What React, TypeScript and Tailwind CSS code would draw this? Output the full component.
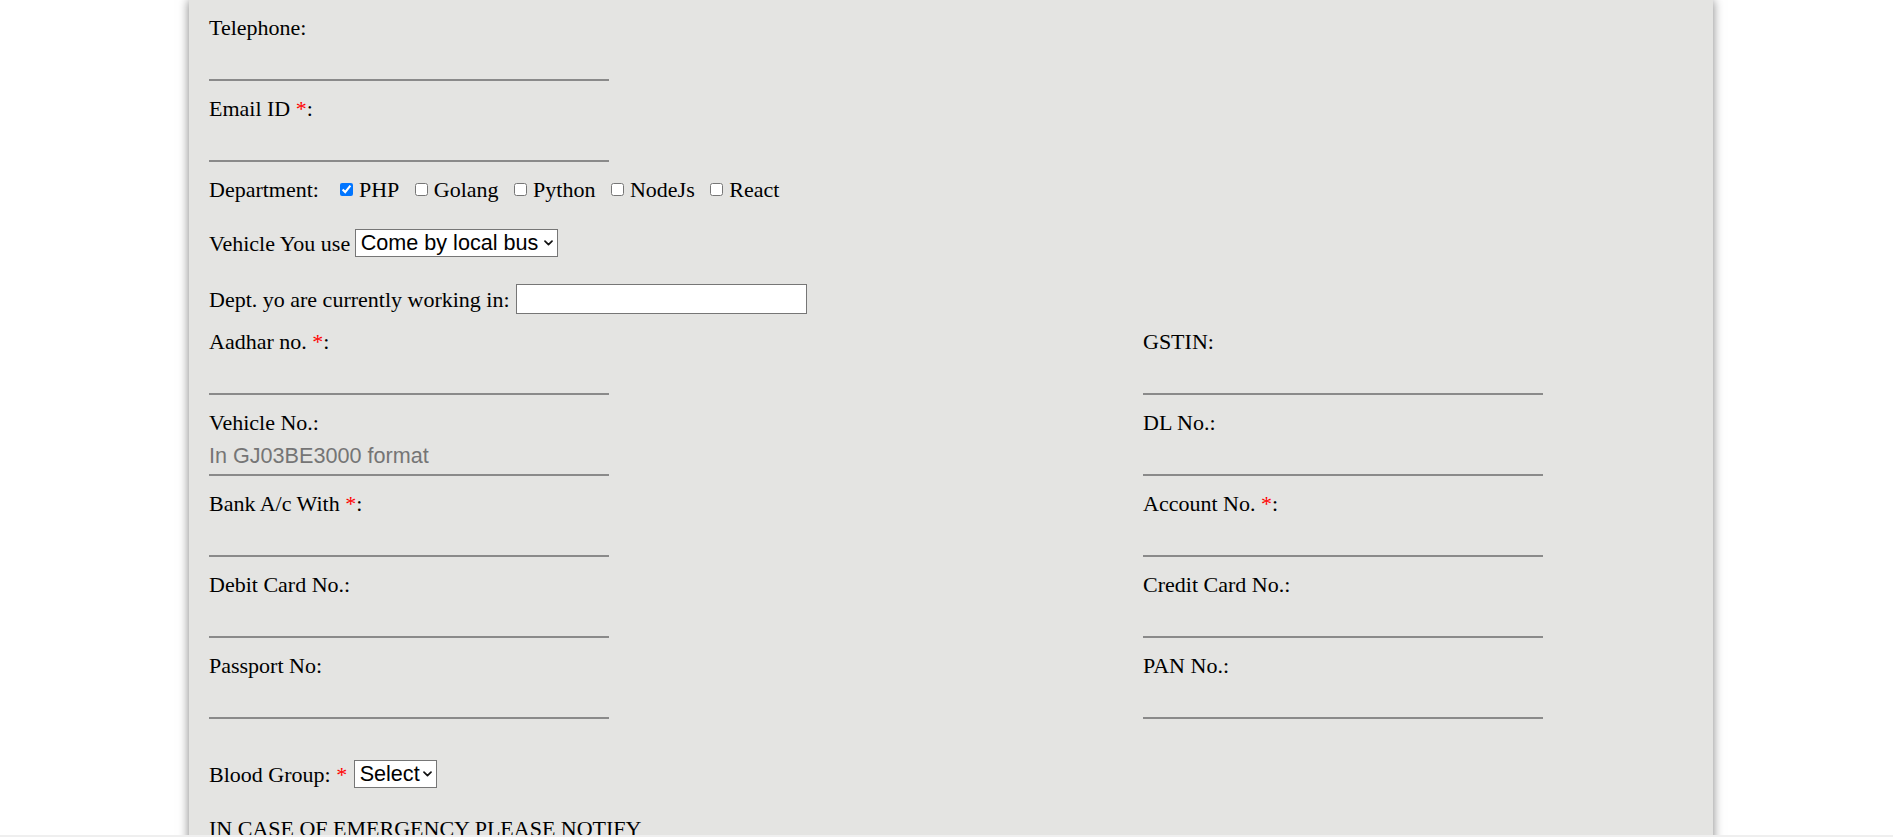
import React from "react";

function Req() {
  return (
    <>
      {" "}
      <span className="text-[#ff0000]">*</span>
    </>
  );
}

function Field({ label, req, placeholder }: { label: string; req?: boolean; placeholder?: string }) {
  return (
    <div className="mb-[15.5px]">
      <div className="h-[24px] leading-[24px] whitespace-nowrap">
        {label}
        {req ? <Req /> : null}:
      </div>
      <input
        type="text"
        placeholder={placeholder}
        className="mt-[4px] block w-[400px] h-[37.5px] border-0 border-b-2 border-solid border-[#8a8a8a] bg-transparent outline-none px-0 text-[21.6px] leading-[24px] text-black font-['Liberation_Sans',Arial,sans-serif] placeholder:text-[#757575]"
      />
    </div>
  );
}

function Chevron() {
  return (
    <svg
      className="pointer-events-none absolute right-[5px] top-1/2 -translate-y-1/2"
      width="9"
      height="6"
      viewBox="0 0 9 6"
      fill="none"
    >
      <path d="M1 1.2 L4.5 4.6 L8 1.2" stroke="#111" strokeWidth="1.7" strokeLinecap="round" strokeLinejoin="round" />
    </svg>
  );
}

function Check({ label, checked, first }: { label: string; checked?: boolean; first?: boolean }) {
  return (
    <div className={first ? "flex items-center ml-[21px]" : "flex items-center ml-[15.5px]"}>
      <input
        type="checkbox"
        defaultChecked={checked}
        className="m-0 w-[13px] h-[13px] accent-[#0075ff]"
      />
      <span className="ml-[6px]">{label}</span>
    </div>
  );
}

export default function App() {
  return (
    <div className="relative h-[837px] overflow-hidden bg-white font-['Liberation_Serif','Times_New_Roman',serif] text-[22px] text-black">
      <div className="ml-[189px] w-[1524px] min-h-[900px] bg-[#e4e4e2] shadow-[0_0_10px_rgba(0,0,0,0.5)] pl-[20px] pt-[15.5px]">
        <Field label="Telephone" />
        <Field label="Email ID" req />

        <div className="flex items-center h-[24px] leading-[24px] mt-[0.7px]">
          <span>Department:</span>
          <Check label="PHP" checked first />
          <Check label="Golang" />
          <Check label="Python" />
          <Check label="NodeJs" />
          <Check label="React" />
        </div>

        <div className="flex items-center h-[28px] mt-[27.6px]">
          <span>Vehicle You use</span>
          <div className="relative ml-[5px]">
            <select
              defaultValue="bus"
              className="block appearance-none w-[203px] h-[28px] bg-white border border-solid border-[#767676] pl-[4.5px] pr-[16px] text-[21.6px] leading-[24px] font-['Liberation_Sans',Arial,sans-serif] text-black outline-none"
            >
              <option value="bus">Come by local bus</option>
              <option value="car">Car</option>
              <option value="bike">Bike</option>
            </select>
            <Chevron />
          </div>
        </div>

        <div className="flex items-center h-[30px] mt-[27px]">
          <span>Dept. yo are currently working in:</span>
          <input
            type="text"
            className="ml-[6px] w-[291px] h-[30px] bg-white border border-solid border-[#767676] px-[2px] text-[21.6px] font-['Liberation_Sans',Arial,sans-serif] outline-none"
          />
        </div>

        <div className="grid grid-cols-[934px_1fr] mt-[15.5px]">
          <Field label="Aadhar no." req />
          <Field label="GSTIN" />
          <Field label="Vehicle No." placeholder="In GJ03BE3000 format" />
          <Field label="DL No." />
          <Field label="Bank A/c With" req />
          <Field label="Account No." req />
          <Field label="Debit Card No." />
          <Field label="Credit Card No." />
          <Field label="Passport No" />
          <Field label="PAN No." />
        </div>

        <div className="flex items-center h-[28px] mt-[25.7px]">
          <span>Blood Group:</span>
          <span className="ml-[5.5px] text-[#ff0000]">*</span>
          <div className="relative ml-[7px]">
            <select
              defaultValue=""
              className="block appearance-none w-[83px] h-[28px] bg-white border border-solid border-[#767676] pl-[4.5px] pr-[14px] text-[21.6px] leading-[24px] font-['Liberation_Sans',Arial,sans-serif] text-black outline-none"
            >
              <option value="">Select</option>
              <option value="A+">A+</option>
              <option value="B+">B+</option>
              <option value="O+">O+</option>
              <option value="AB+">AB+</option>
            </select>
            <Chevron />
          </div>
        </div>

        <div className="mt-[28.4px] h-[24px] leading-[24px]">IN CASE OF EMERGENCY PLEASE NOTIFY</div>
      </div>
      <div className="absolute left-0 right-0 bottom-0 h-[2px] bg-[#efefef]" />
    </div>
  );
}
